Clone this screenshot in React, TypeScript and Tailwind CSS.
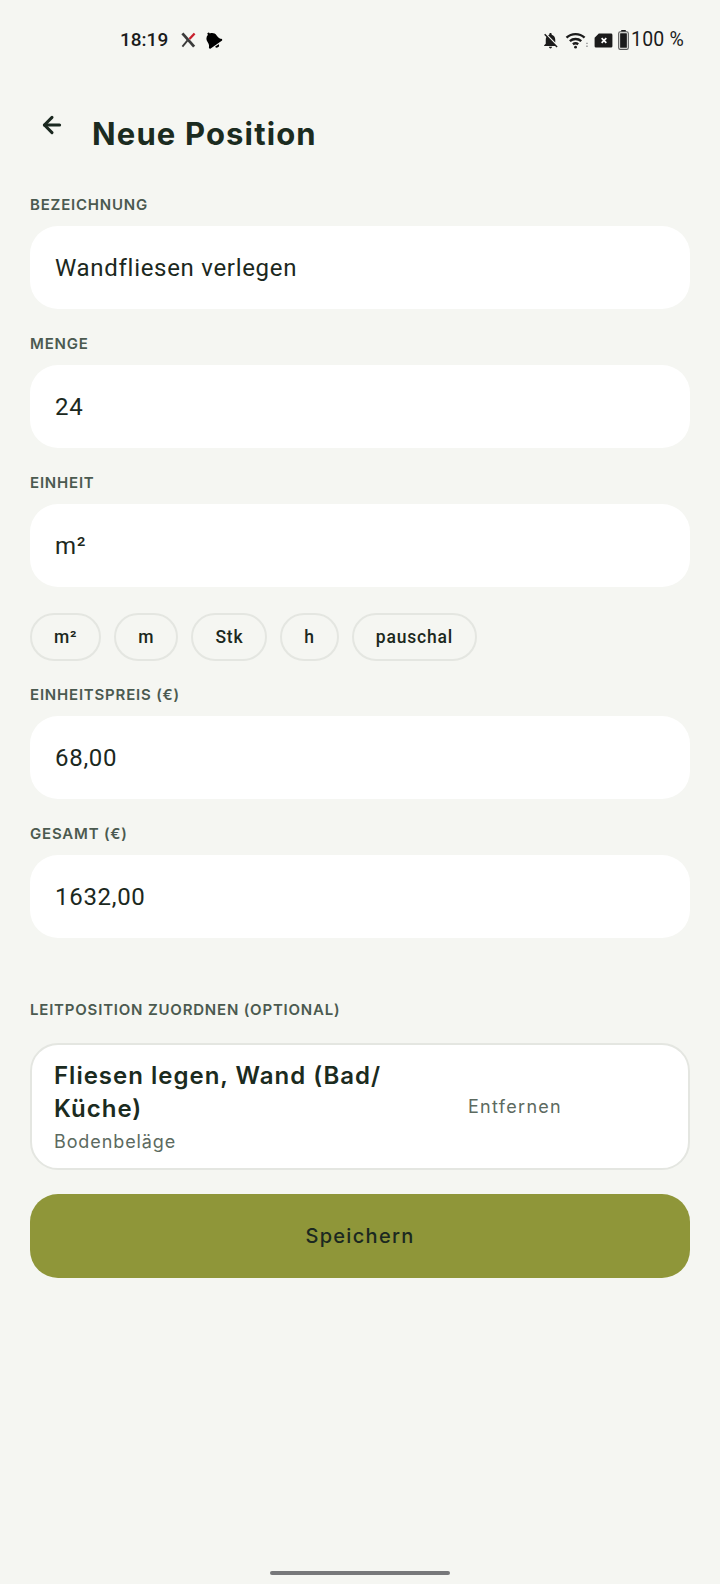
import { ArrowLeft } from "lucide-react";
import { FaBell } from "react-icons/fa";
import { MdNotificationsOff } from "react-icons/md";

const heading = "font-['Inter','Liberation_Sans',sans-serif]";
const body = "font-['Roboto','Liberation_Sans',sans-serif]";

function StatusBar() {
  return (
    <div className="flex h-[80px] items-center justify-between pl-[120px] pr-[36px] text-[#1b1b1b]">
      <div className="flex items-center">
        <span className={`${body} text-[19px] font-medium`}>18:19</span>
        {/* X logo with the red stroke */}
        <svg viewBox="0 0 16 16" className="ml-[13px] h-[16px] w-[15px]">
          <path d="M1.500 1 L14 15" stroke="#3b3b3b" strokeWidth="3" />
          <path d="M1.500 15 L7 8.500" stroke="#3b3b3b" strokeWidth="2" />
          <path d="M9 7 L14.500 1" stroke="#c8202c" strokeWidth="2.400" />
        </svg>
        <FaBell className="ml-[8px] h-[18px] w-[18px] -rotate-[35deg] text-black" />
      </div>
      <div className="flex items-center">
        <MdNotificationsOff className="h-[19px] w-[19px] text-[#1b1b1b]" />
        {/* wifi */}
        <svg viewBox="0 0 24 20" className="ml-[5px] h-[19px] w-[23px]" fill="none" stroke="#1b1b1b" strokeWidth="2.500">
          <path d="M1.500 7a14 14 0 0 1 19 0" />
          <path d="M5 10.700a9 9 0 0 1 12 0" />
          <path d="M8.200 14a4.500 4.500 0 0 1 5.600 0" />
          <circle cx="11" cy="17" r="1.500" fill="#1b1b1b" stroke="none" />
          <path d="M22 13h2M22 16h2" stroke="#aaaaaa" strokeWidth="1.500" />
        </svg>
        {/* sim without service */}
        <svg viewBox="0 0 20 16" className="ml-[6px] h-[15px] w-[19px]">
          <path d="M5 .5h13a1.500 1.500 0 0 1 1.500 1.500v12a1.500 1.500 0 0 1-1.500 1.500H2A1.500 1.500 0 0 1 .5 14V5z" fill="#1b1b1b" />
          <path d="M8 5.500l5 5M13 5.500l-5 5" stroke="#fff" strokeWidth="1.800" />
        </svg>
        {/* battery */}
        <svg viewBox="0 0 12 22" className="ml-[5px] h-[20px] w-[11px]">
          <rect x="3.500" y="0" width="5" height="2" fill="#1b1b1b" />
          <rect x=".7" y="2" width="10.600" height="19.300" rx="1.800" fill="none" stroke="#555" strokeWidth="1.200" />
          <rect x="2.300" y="3.600" width="7.400" height="16" rx=".6" fill="#1b1b1b" />
        </svg>
        <span className={`${body} ml-[2px] text-[19.500px] tracking-[0.2px]`}>100 %</span>
      </div>
    </div>
  );
}

function Label({ children, className = "" }: { children: string; className?: string }) {
  return (
    <div className={`${heading} h-[20px] text-[15px] leading-[20px] font-semibold tracking-[0.8px] text-[#4b5a50] ${className}`}>
      {children}
    </div>
  );
}

function Field({ label, value }: { label: string; value: string }) {
  return (
    <div>
      <Label>{label}</Label>
      <div className={`${body} mt-[11px] flex h-[83px] items-center rounded-[28px] bg-white px-[25px] text-[24px] tracking-[0.7px] text-[#1b2820]`}>
        {value}
      </div>
    </div>
  );
}

const chips = ["m²", "m", "Stk", "h", "pauschal"];

export default function App() {
  return (
    <div className="relative h-[1584px] w-[720px] overflow-hidden bg-[#f5f6f2]">
      <StatusBar />
      <div className="px-[30px]">
        <div className="flex h-[115px] items-start">
          <ArrowLeft className="mt-[32px] ml-[9px] h-[26px] w-[26px] text-[#1b2820]" strokeWidth={2.800} />
          <h1 className={`${heading} mt-[32px] ml-[27px] text-[31px] leading-[44px] font-bold tracking-[1.15px] text-[#1b2b20]`}>Neue Position</h1>
        </div>
        <div className="space-y-[25px]">
          <Field label="BEZEICHNUNG" value="Wandfliesen verlegen" />
          <Field label="MENGE" value="24" />
          <Field label="EINHEIT" value="m²" />
        </div>
        <div className="mt-[26px] flex gap-[13px]">
          {chips.map((c) => (
            <div
              key={c}
              className={`${body} flex h-[48px] items-center rounded-full border-2 border-[#e4e6e1] px-[22px] text-[17.500px] font-medium tracking-[0.8px] text-[#1b2820]`}
            >
              {c}
            </div>
          ))}
        </div>
        <div className="mt-[24px] space-y-[25px]">
          <Field label="EINHEITSPREIS (€)" value="68,00" />
          <Field label="GESAMT (€)" value="1632,00" />
        </div>
        <Label className="mt-[62px]">LEITPOSITION ZUORDNEN (OPTIONAL)</Label>
        <div className="mt-[23px] flex h-[127px] items-center rounded-[28px] border-2 border-[#e4e6e1] bg-white pl-[22px]">
          <div className="w-[345px]">
            <div className={`${heading} text-[24px] leading-[33px] font-semibold tracking-[1px] text-[#1b2b20]`}>Fliesen legen, Wand (Bad/ Küche)</div>
            <div className={`${heading} mt-[4px] text-[18px] leading-[26px] tracking-[0.9px] text-[#5c6a60]`}>Bodenbeläge</div>
          </div>
          <div className={`${heading} ml-[69px] text-[18px] tracking-[1.300px] text-[#5c6a60]`}>Entfernen</div>
        </div>
        <button className={`${heading} mt-[24px] flex h-[84px] w-full items-center justify-center rounded-[28px] bg-[#8f9639] text-[20px] font-medium tracking-[1.300px] text-[#1b2820]`}>
          Speichern
        </button>
      </div>
      {/* gesture bar */}
      <div className="absolute bottom-[9px] left-[270px] h-[4px] w-[180px] rounded-full bg-[#77787a]" />
    </div>
  );
}
